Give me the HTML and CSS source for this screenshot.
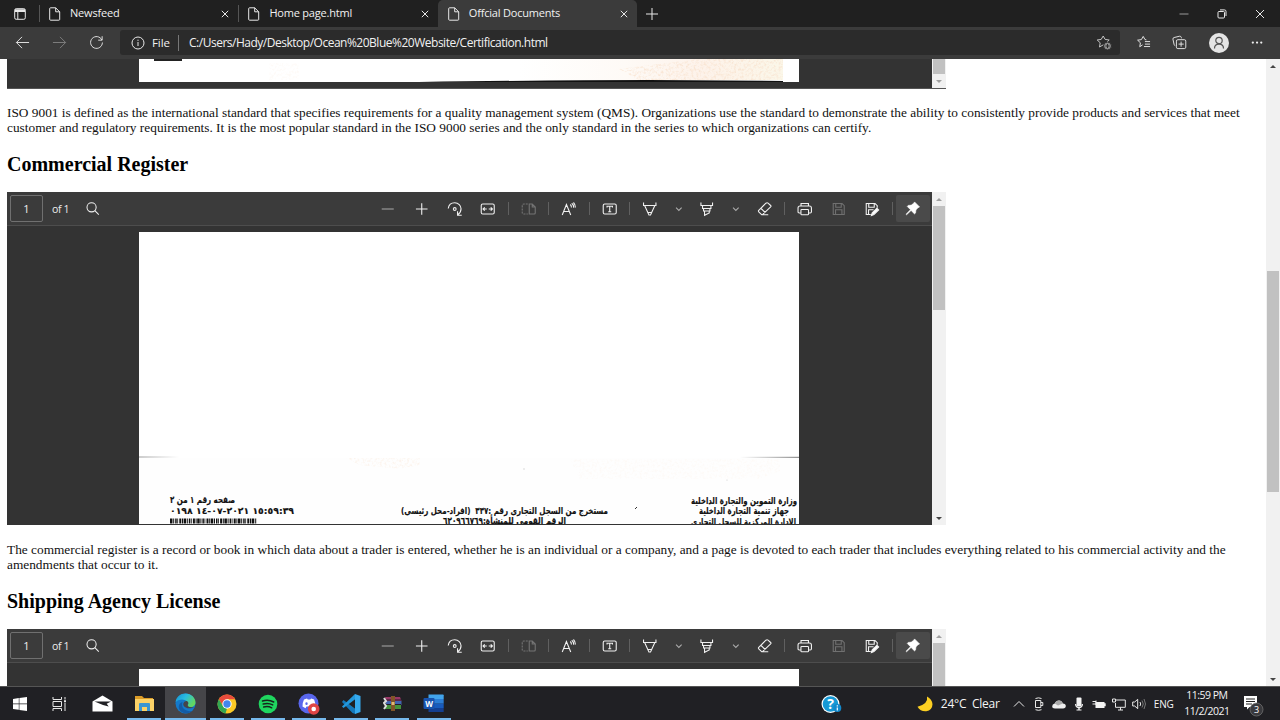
FILE: index.html
```html
<!DOCTYPE html>
<html lang="en">
<head>
<meta charset="utf-8">
<title>Offcial Documents</title>
<link rel="stylesheet" href="styles.css">
</head>
<body>
<svg class="defs" aria-hidden="true">
  <symbol id="doc" viewBox="0 0 12 14"><path d="M1.5 .8h5.2l4 4v7.6q0 .8-.8.8H1.5q-.8 0-.8-.8V1.6q0-.8.8-.8zM6.7.8v4h4"/></symbol>
  <symbol id="close" viewBox="0 0 8 8"><path d="M.8.8l6.4 6.4M7.2.8L.8 7.2"/></symbol>
  <symbol id="minus" viewBox="0 0 16 16"><path d="M2 8h12" stroke="#aaa"/></symbol>
  <symbol id="plus" viewBox="0 0 16 16"><path d="M2.2 8h11.6M8 2.2v11.6"/></symbol>
  <symbol id="rotate" viewBox="0 0 16 16"><path d="M1.500 7.500C2 3.800 4.700 1.800 8 1.800c3.600 0 6.300 2.600 6.300 6 0 2.600-1.300 4.500-3 5.700M15 14.200h-4.200v-4"/><circle cx="8" cy="8" r="1.400"/></symbol>
  <symbol id="fit" viewBox="0 0 16 16"><rect x="1.500" y="3" width="13" height="10" rx="1.500"/><path d="M3.500 8h3.500M9 8h3.500M5 6.300L3.300 8 5 9.700M11 6.300L12.700 8 11 9.700"/></symbol>
  <symbol id="pages" viewBox="0 0 16 16"><g stroke="#747474"><path d="M8.500 3h3l3 3v6q0 1-1 1h-5zM11.500 3v3h3"/><path d="M7 3H3Q1.500 3 1.500 4.500v7Q1.500 13 3 13h4" stroke-dasharray="2 1"/></g></symbol>
  <symbol id="read" viewBox="0 0 16 16"><path d="M1.500 14L5.700 3.500 10 14M3 10.500h5.500M9.500 3.500q1.200 1 1.200 3M11 2.200q2 1.500 2 4.500M12.700 1.500q2 2 2 5"/></symbol>
  <symbol id="textbox" viewBox="0 0 16 16"><rect x="1.500" y="3" width="13" height="10" rx="1.500"/><path d="M5.300 6.500V5.300h5.400v1.200M8 5.300v5.400M6.500 10.700h3"/></symbol>
  <symbol id="pen" viewBox="0 0 16 16"><path d="M1.800 1.500v3h12.400v-3M3 4.700L7.200 14h1.600L13 4.700M6.300 11.500h3.400"/></symbol>
  <symbol id="marker" viewBox="0 0 16 16"><path d="M2.200 1.500v3h11.600v-3M3.800 4.500V7.500h8.400v-3M4.800 7.500v2.500h6.400V7.500M5.800 10v4.300l4.700-2.300v-2"/></symbol>
  <symbol id="chev" viewBox="0 0 8 8"><path d="M1.200 2.700L4 5.500l2.800-2.800" stroke="#aaa"/></symbol>
  <symbol id="eraser" viewBox="0 0 16 16"><path d="M9.200 2.200L2 9.400q-.7.700 0 1.400l2.600 2.600q.7.700 1.400 0l7.900-7.500q.7-.7 0-1.400l-2.600-2.300q-.9-.8-2.100 0zM4.300 7.500l4.200 4M6 13.800h5.500"/></symbol>
  <symbol id="print" viewBox="0 0 16 16"><path d="M4.300 5V2.500h7.400V5M4 12H2.500Q1.300 12 1.300 10.800V7Q1.300 5 3.300 5h9.400q2 0 2 2v3.800q0 1.200-1.200 1.200H12"/><rect x="4.200" y="8.500" width="7.600" height="5.300" rx=".8"/></symbol>
  <symbol id="save" viewBox="0 0 16 16"><path d="M2.500 2.500h8.800l2.200 2.200v8.800h-11zM5 2.500v3.700h5.500V2.500M4.800 13.500V8.800h6.400v4.700" stroke="#707070"/></symbol>
  <symbol id="saveas" viewBox="0 0 16 16"><path d="M7 13.500H2.500v-11h8.800l2.200 2.200v2M5 2.500v3.700h5.500V2.500M4.800 13.500V8.800h5"/><path d="M7.700 14.500l.8-2.800 4.700-4.500 1.700 1.700-4.700 4.600z" fill="#fff"/></symbol>
  <symbol id="pin" viewBox="0 0 16 16"><path d="M9.500 1.800l4.700 4.700-1.500.8-1.900 2-.4 3-1 .8-3.200-3.200-4.200 4-.6-.5 4.200-4.300-3-3 .8-1 3-.3 2.200-1.700z" fill="#fff" stroke="#fff" stroke-width=".5"/></symbol>
  <symbol id="search" viewBox="0 0 16 16"><circle cx="7" cy="6.700" r="4.900"/><path d="M10.500 10.300l4.200 4.200"/></symbol>
  <symbol id="star" viewBox="0 0 16 16"><path d="M9.500 10.800L7.300 9.800 3.500 12l.7-4.200L1.200 5l4-.6L7.200 1l1.900 3.400 4.100.6L11 7"/></symbol>
</svg>

<header class="browser">
  <div class="tabs">
    <svg class="tabmenu line" viewBox="0 0 12 12"><rect x=".7" y=".7" width="10.600" height="10.600" rx="1.500"/><path d="M1 2h10M1 3.300h10" stroke-width="1.500"/><path d="M3.800 4v7"/></svg>
    <div class="tab t1"><svg class="doc line"><use href="#doc"/></svg><span>Newsfeed</span><svg class="x line"><use href="#close"/></svg></div>
    <div class="tab t2"><svg class="doc line"><use href="#doc"/></svg><span>Home page.html</span><svg class="x line"><use href="#close"/></svg></div>
    <div class="tab t3"><svg class="doc line"><use href="#doc"/></svg><span>Offcial Documents</span><svg class="x line"><use href="#close"/></svg></div>
    <svg class="newtab line" viewBox="0 0 12 12"><path d="M0 6h12M6 0v12"/></svg>
    <div class="winbtns">
      <svg class="line" viewBox="0 0 10 10"><path d="M.5 5h9" stroke="#999"/></svg>
      <svg class="line" viewBox="0 0 10 10"><rect x="1" y="2.500" width="6.500" height="6.500" rx="1"/><path d="M3 .9h4.500q1.500 0 1.500 1.500V7"/></svg>
      <svg class="line" viewBox="0 0 10 10"><path d="M1 1l8 8M9 1L1 9"/></svg>
    </div>
  </div>
  <div class="nav">
    <svg class="navicon line" viewBox="0 0 16 16"><path d="M15 8H1.500M7.500 2L1.500 8l6 6"/></svg>
    <svg class="navicon dim line" viewBox="0 0 16 16"><path d="M1 8h13.500M8.500 2l6 6-6 6"/></svg>
    <svg class="navicon line" viewBox="0 0 16 16"><path d="M13.700 5.300A6.300 6.300 0 1 0 14.300 8M14 1.300v4.200H9.800"/></svg>
    <div class="address">
      <svg class="info line" viewBox="0 0 14 14"><circle cx="7" cy="7" r="6"/><path d="M7 6v4M7 3.700v1.200"/></svg>
      <span class="scheme">File</span><span class="url">C:/Users/Hady/Desktop/Ocean%20Blue%20Website/Certification.html</span>
      <svg class="addfav line" viewBox="0 0 16 16"><use href="#star"/><circle cx="11.500" cy="11" r="4" fill="#a5a5a5" stroke="#2b2b2b"/><path d="M9.500 11h4M11.500 9v4" stroke="#2b2b2b"/></svg>
    </div>
    <div class="tools">
      <svg class="line" viewBox="0 0 16 16"><path d="M7 10.500L4 12.500l.7-4.200L1.700 5.500l4-.6L7.700 1.500l1.900 3.400 1.500.3M9.500 7h5.500M9.500 9.700h5.500M8.500 12.300H15"/></svg>
      <svg class="line" viewBox="0 0 16 16"><path d="M3.500 11.500Q2.500 11.200 2.200 10L1 4.500Q.8 3 2.200 2.700L8 1.300q1.500-.2 1.900 1.200l.2 1M4.700 12V6.500q0-1.500 1.500-1.500h7q1.500 0 1.500 1.500V13q0 1.500-1.500 1.500h-7q-1.500 0-1.500-1.500zM9.700 7v5.500M7 9.700h5.500"/></svg>
      <span class="avatar"><svg viewBox="0 0 20 20"><circle cx="10" cy="7.500" r="3.200"/><path d="M5.500 15.500q0-4.300 4.500-4.300t4.500 4.300"/></svg></span>
      <svg viewBox="0 0 16 16" fill="#eee"><circle cx="3" cy="8" r="1.200"/><circle cx="7.500" cy="8" r="1.200"/><circle cx="12" cy="8" r="1.200"/></svg>
    </div>
  </div>
</header>

<div class="viewport">
  <main class="page">
    <div class="frame tail">
      <div class="viewer"><svg class="scan" viewBox="0 0 660 23">
        <defs><linearGradient id="stain"><stop offset="0" stop-color="#fff"/><stop offset=".4" stop-color="#fefaf6"/><stop offset=".7" stop-color="#fdf2ea"/><stop offset="1" stop-color="#fbf7e9"/></linearGradient><filter id="grain" x="0" y="0" width="1" height="1"><feTurbulence type="fractalNoise" baseFrequency=".4" numOctaves="3"/><feColorMatrix values="0 0 0 0 .94  0 0 0 0 .75  0 0 0 0 .6  3 0 0 0 -1.300"/><feComposite in2="SourceGraphic" operator="in"/></filter></defs>
        <rect width="660" height="23" fill="#fff"/><rect x="380" width="264" height="21" fill="url(#stain)"/><path d="M480 10l80-10h84v21H500z" filter="url(#grain)" opacity=".65"/><path d="M130 4h30v17h-30z" filter="url(#grain)" opacity=".15"/><rect x="15" width="28" height="2" fill="#222"/><path d="M280 23Q420 21 510 21L644 22v1z" fill="#111"/></svg></div>
      <div class="vbar"><i class="thumb"></i><i class="down"></i></div>
    </div>
    <p class="iso">ISO 9001 is defined as the international standard that specifies requirements for a quality management system (QMS). Organizations use the standard to demonstrate the ability to consistently provide products and services that meet<br>customer and regulatory requirements. It is the most popular standard in the ISO 9000 series and the only standard in the series to which organizations can certify.</p>
    <h2>Commercial Register</h2>
    <div class="frame">
      <div class="viewer">
        <div class="pdfbar"><span class="num">1</span><span class="of">of 1</span><svg class="find"><use href="#search"/></svg>
          <div class="icons"><svg><use href="#minus"/></svg><svg><use href="#plus"/></svg><svg><use href="#rotate"/></svg><svg><use href="#fit"/></svg><i></i><svg><use href="#pages"/></svg><i></i><svg><use href="#read"/></svg><i></i><svg><use href="#textbox"/></svg><i></i><svg><use href="#pen"/></svg><svg class="chev"><use href="#chev"/></svg><svg><use href="#marker"/></svg><svg class="chev"><use href="#chev"/></svg><svg><use href="#eraser"/></svg><i></i><svg><use href="#print"/></svg><svg><use href="#save"/></svg><svg><use href="#saveas"/></svg><i></i><svg class="pinned"><use href="#pin"/></svg></div>
        </div>
        <svg class="scan full" viewBox="139 232 660 292">
          <defs><linearGradient id="edgeL"><stop offset="0" stop-color="#999"/><stop offset="1" stop-color="#fff"/></linearGradient><linearGradient id="edgeR"><stop offset="0" stop-color="#fff"/><stop offset="1" stop-color="#777"/></linearGradient></defs>
          <rect x="139" y="232" width="660" height="292" fill="#fff"/>
          <rect x="139" y="458" width="660" height="66" fill="#fefefe"/>
          <path d="M345 458h75v7l-20 4-40-4z" filter="url(#grain)" opacity=".3"/><path d="M570 459h210v12l-20 8H580z" filter="url(#grain)" opacity=".12"/>
          <rect x="139" y="456.500" width="40" height="1" fill="url(#edgeL)"/><rect x="740" y="456.800" width="59" height="1" fill="url(#edgeR)"/>
          <g class="arabic">
            <text x="170" y="502.500" textLength="65" lengthAdjust="spacingAndGlyphs">صفحه رقم ١ من ٢</text>
            <text class="digits" x="170" y="513.500" textLength="124" lengthAdjust="spacingAndGlyphs">٠١٩٨ ١٤-٠٧-٢٠٢١ ١٥:٥٩:٣٩</text>
            <text x="401" y="514" textLength="207" lengthAdjust="spacingAndGlyphs">مستخرج من السجل التجارى رقم :٣٣٧ &#160;(افراد-محل رئيسى)</text>
            <text x="443" y="524" textLength="123" lengthAdjust="spacingAndGlyphs">الرقم القومى للمنشأة:٦٢٠٩٦٦٧٦٩</text>
            <text x="691" y="503.500" textLength="106" lengthAdjust="spacingAndGlyphs">وزارة التموين والتجارة الداخلية</text>
            <text x="699" y="514" textLength="90" lengthAdjust="spacingAndGlyphs">جهاز تنمية التجارة الداخلية</text>
            <text x="691" y="524.500" textLength="105" lengthAdjust="spacingAndGlyphs">الادارة المركزية للسجل التجارى</text>
          </g>
          <path d="M170 521h87" stroke="#111" stroke-width="5" stroke-dasharray="2.500 .7 1 1 1.500 .6 .8 1.200 2 .7 1 .6"/>
          <path d="M635 509l2-2" stroke="#333"/><circle cx="524" cy="469" r=".7" fill="#ccc"/><circle cx="727" cy="480" r=".6" fill="#ccc"/>
        </svg>
      </div>
      <div class="vbar"><i class="up"></i><i class="thumb"></i><i class="down dark"></i></div>
    </div>
    <p class="reg">The commercial register is a record or book in which data about a trader is entered, whether he is an individual or a company, and a page is devoted to each trader that includes everything related to his commercial activity and the<br>amendments that occur to it.</p>
    <h2>Shipping Agency License</h2>
    <div class="frame">
      <div class="viewer">
        <div class="pdfbar"><span class="num">1</span><span class="of">of 1</span><svg class="find"><use href="#search"/></svg>
          <div class="icons"><svg><use href="#minus"/></svg><svg><use href="#plus"/></svg><svg><use href="#rotate"/></svg><svg><use href="#fit"/></svg><i></i><svg><use href="#pages"/></svg><i></i><svg><use href="#read"/></svg><i></i><svg><use href="#textbox"/></svg><i></i><svg><use href="#pen"/></svg><svg class="chev"><use href="#chev"/></svg><svg><use href="#marker"/></svg><svg class="chev"><use href="#chev"/></svg><svg><use href="#eraser"/></svg><i></i><svg><use href="#print"/></svg><svg><use href="#save"/></svg><svg><use href="#saveas"/></svg><i></i><svg class="pinned"><use href="#pin"/></svg></div>
        </div>
        <div class="scan full blank"></div>
      </div>
      <div class="vbar"><i class="up"></i><i class="thumb"></i></div>
    </div>
  </main>
  <div class="scrollbar"><i class="up dark"></i><i class="thumb"></i><i class="down dark"></i></div>
</div>

<footer class="taskbar">
  <div class="app start"><svg width="14" height="14" viewBox="0 0 14 14" fill="#fff"><path d="M0 2l5.800-.9v5.500H0zM6.400 1L14 0v6.600H6.400zM0 7.200h5.800v5.500L0 12zM6.400 7.200H14V14l-7.600-1z"/></svg></div>
  <div class="app view"><svg class="line" width="15" height="14" viewBox="0 0 15 14"><path d="M1 0v2.500h8.500V0M1 14v-2.500h8.500V14M1 4.500h8.500v5H1zM13 0v2.500M13 6v8"/><path d="M12 4.200h2" stroke-width="2"/></svg></div>
  <div class="app mail"><svg width="21" height="17" viewBox="0 0 21 17"><path d="M.5 6.500L10.500.5l10 6v10H.5z" fill="#fff"/><path d="M2.500 6.500h16.500l-4.300 2.300 2 2.700L11 10z" fill="#202024"/></svg></div>
  <div class="app on"><svg width="19" height="17" viewBox="0 0 19 17"><path d="M0 1h7l2 2h9v5H0z" fill="#dc9c28"/><path d="M0 4h19v12H0z" fill="#fbd267"/><path d="M4 16V9q0-1 1-1h9q1 0 1 1v7h-3v-4H7v4z" fill="#3a96d2"/></svg></div>
  <div class="app on active"><svg width="21" height="21" viewBox="0 0 21 21"><defs><linearGradient id="eg" x1="0" x2="1" y1="0" y2=".5"><stop offset="0" stop-color="#168fd2"/><stop offset=".5" stop-color="#29bce0"/><stop offset="1" stop-color="#63d860"/></linearGradient></defs><circle cx="10.500" cy="10.500" r="10" fill="#1479ca"/><path d="M.6 9C1.500 3.500 5.500.5 10.500.5c6 0 10 4.500 10 9 0 3-2.500 4.700-5.500 4.700-2 0-3-1-2.500-2.200C14.500 8.500 7.500 3.500.6 9z" fill="url(#eg)"/><path d="M7.500 9c-2 6 3 10 9.500 9-3 3.200-8.500 3-11.500 0-3-3.300-2-8 2-9z" fill="#135ba5"/><path d="M12.500 12q2-2-.5-4-3-.5-3.700 2.500c-.5 3 3 6 9.400 4.200l1.500-.8q-6 1.500-6.700-1.900z" fill="#454549"/></svg></div>
  <div class="app on"><svg width="20" height="20" viewBox="0 0 20 20"><circle cx="10" cy="10" r="9.500" fill="#fbc926"/><path d="M1.800 5.200A9.500 9.500 0 0 1 18.200 5.300H10L6 12z" fill="#e94b3c"/><path d="M1.800 5.200L6 12.200l4 2.300-1.500 4.900A9.500 9.500 0 0 1 1.800 5.200z" fill="#32a753"/><circle cx="10" cy="10" r="4.700" fill="#fff"/><circle cx="10" cy="10" r="3.700" fill="#4386ee"/></svg></div>
  <div class="app on"><svg width="20" height="20" viewBox="0 0 20 20"><circle cx="10" cy="10" r="9.300" fill="#1fd65f"/><path d="M4.500 7q6-1.800 11.200 1M5.200 10q5.200-1.500 9.500.9M5.700 13q4.500-1.200 8 .8" fill="none" stroke="#17251c" stroke-width="1.500" stroke-linecap="round"/></svg></div>
  <div class="app on"><svg width="22" height="22" viewBox="0 0 22 22"><circle cx="10.500" cy="10.500" r="10" fill="#5966ec"/><path d="M6 6.500l3-1 .8 1h2.500l.8-1 3 1q1.500 3.500 1.300 7l-3 1.700-1-1.700H8.500l-1 1.700-3-1.700Q4.300 10 6 6.500z" fill="#fff"/><ellipse cx="8.500" cy="10.700" rx="1.200" ry="1.400" fill="#5966ec"/><circle cx="15.700" cy="16" r="5.800" fill="#df4546"/><circle cx="15.700" cy="16" r="2.300" fill="#fff"/></svg></div>
  <div class="app on"><svg width="20" height="20" viewBox="0 0 20 20"><path d="M14.500 0v20l-3-1L1 8l1.500-2L14.500 15z" fill="#1478bb"/><path d="M14.500 5L2.500 14 1 12.500 14 0z" fill="#2398dc"/><path d="M14 0l5.500 2v16L14 20z" fill="#35a9ee"/></svg></div>
  <div class="app on"><svg width="19" height="16" viewBox="0 0 19 16"><path d="M2 1h15l1.500 4H3z" fill="#983766"/><path d="M3 5h15.500v4H3z" fill="#4265b0"/><path d="M2 9h16v5H2z" fill="#43923b"/><path d="M2 4h16M2 8.500h16M2 13.500h16" stroke="#261b29"/><path d="M1 2l2 3-2 2 2 3-2 3" stroke="#ddd" stroke-width="2" fill="none"/><path d="M8 0h4v15H8z" fill="#805528"/><path d="M8.500 6h3v3h-3z" fill="#e0ba74"/></svg></div>
  <div class="app on word"><svg width="21" height="19" viewBox="0 0 21 19"><path d="M5.500.5H20q.7 0 .7.700V5H5.500z" fill="#42a4ec"/><path d="M5.500 5h15.200v4.700H5.500z" fill="#2c7dd5"/><path d="M5.500 9.700h15.200V14H5.500z" fill="#185bbd"/><path d="M5.500 14h15.200v4H5.500z" fill="#143f91"/><rect x=".5" y="4" width="11" height="11" rx="1" fill="#1853ae"/><text x="6" y="12.500" text-anchor="middle" class="w">W</text></svg></div>
  <svg class="help" viewBox="0 0 21 20"><circle cx="9.500" cy="10" r="9" fill="#fff"/><circle cx="9.500" cy="10" r="7.800" fill="#1699d5"/><text x="9.500" y="15" text-anchor="middle" class="q">?</text><circle cx="16.300" cy="14" r="4" fill="#1389cc"/><path d="M16.300 11.300v1.200M16.300 13.400v3" stroke="#fff" stroke-width="1.200"/></svg>
  <svg class="moon" viewBox="0 0 16 16"><path d="M10 .5q1.500 7.300-9.500 10.300 3 5 8.800 4.500 6-1 6.200-7Q15 3 10 .5z" fill="#fccf22"/></svg>
  <span class="weather">24°C&#160; Clear</span>
  <div class="tray">
    <svg class="line" viewBox="0 0 12 14"><path d="M1 9.500l5-5 5 5"/></svg>
    <svg class="line" viewBox="0 0 12 14"><path d="M2.500 3.500h5.300v7H2.500zM7.800 5.500h2v3h-2M2.500 1.500q3-1.300 6 0M2.500 12.700q3 1.300 6 0"/></svg>
    <svg class="cloud" viewBox="0 0 14 14"><path d="M3 11.500q-2.800 0-2.800-2.200Q.2 7 2.700 6.500 4 3.500 7 3.500q2.800 0 3.800 3 3 .2 3 2.600 0 2.400-2.800 2.400z" fill="#eee"/><path d="M2.700 6.500Q4 3.500 7 3.500q2.800 0 3.800 3L6 8.500z" fill="#aaa"/></svg>
    <svg viewBox="0 0 12 14" fill="#f3f3f3"><rect x="3.500" y=".5" width="5" height="9" rx="1"/><path d="M2 7h1.200q0 3 2.800 3t2.800-3H10q0 3.600-3.300 4.200v1.300H8.500v1h-5v-1h1.800v-1.300Q2 10.600 2 7z"/></svg>
    <svg class="battery" viewBox="0 0 14 14"><path d="M3.500 5h9v1.300h1.200v3h-1.200V11h-9z" fill="#f3f3f3"/><path d="M.5 4.500h3.500M.5 7h3.500M4 3.500V8" stroke="#eee"/></svg>
    <svg class="line net" viewBox="0 0 14 14"><path d="M4 3h9.300v7.300H3.500V6M6 13h5M8.500 10.300V13"/><path d="M.5 2h3v3h-3z"/></svg>
    <svg class="line snd" viewBox="0 0 14 14"><path d="M.7 5h2l3-2.700v9.400L2.700 9h-2zM8 5q1.300 2 0 4"/><path d="M10 3.500q2.500 3.500 0 7M12 2q3 5 0 10" stroke="#777"/></svg>
  </div>
  <span class="eng">ENG</span>
  <div class="clock"><span>11:59 PM</span><span>11/2/2021</span></div>
  <svg class="notice" viewBox="0 0 22 22"><path d="M1 1h13v11H6.500L4 14.500V12H1z" fill="#fff"/><path d="M3 4h9M3 6.500h9M3 9h6" stroke="#222"/><circle cx="13.500" cy="14.500" r="6.500" fill="#39393d" stroke="#777" stroke-width=".7"/><text x="13.500" y="18" text-anchor="middle">3</text></svg>
</footer>
</body>
</html>
```
FILE: styles.css
```css
* { box-sizing: border-box; }
body { margin: 0; width: 1280px; height: 720px; overflow: hidden; display: flex; flex-direction: column; background: #fff; font-family: "Open Sans", "Noto Sans", sans-serif; }
svg { display: block; flex: none; }
.defs { position: absolute; width: 0; height: 0; }
.line { fill: none; stroke: #e8e8e8; stroke-width: 1; }
.browser { height: 59px; flex: none; color: #f1f1f1; }
.tabs { display: flex; align-items: center; height: 27px; background: #202020; }
.tabmenu { width: 12px; height: 12px; margin: 0 13px 0 14px; }
.tab { display: flex; align-items: center; height: 27px; width: 199.400px; padding: 0 9px 0 10px; font-size: 11px; letter-spacing: -.2px; white-space: nowrap; }
.tab span { padding-bottom: 2px; }
.t1, .t2 { background: linear-gradient(#555, #555) 0 5px / 1px 17px no-repeat; }
.t3 { background: #3b3b3b; border-radius: 5px 5px 0 0; }
.doc { width: 12px; height: 14px; margin-right: 9px; }
.x { width: 8px; height: 8px; margin-left: auto; }
.newtab { width: 12px; height: 12px; margin-left: 9px; }
.winbtns { display: flex; gap: 28px; margin: 0 15px 0 auto; }
.winbtns svg { width: 10px; height: 10px; }
.nav { display: flex; align-items: center; height: 32px; background: #3b3b3b; padding-bottom: 1px; }
.navicon { width: 15px; height: 15px; margin-left: 15px; }
.navicon + .navicon { margin-left: 22px; }
.dim { opacity: .4; }
.address { display: flex; align-items: center; width: 1000px; height: 25px; margin-left: 16px; padding: 0 8px 0 11px; background: #2b2b2b; border-radius: 3px; font-size: 12px; white-space: nowrap; }
.info { width: 14px; height: 14px; margin-right: 7px; }
.scheme { width: 27px; height: 16px; line-height: 15px; font-size: 11.500px; letter-spacing: -.1px; border-right: 1px solid #777; }
.url { margin-left: 10px; line-height: 16px; letter-spacing: -.49px; }
.addfav { width: 16px; height: 16px; margin-left: auto; opacity: .8; }
.tools { display: flex; align-items: center; margin: 0 15px 0 16px; width: 129px; justify-content: space-between; }
.tools > svg { width: 15px; height: 15px; }
.avatar { width: 20px; height: 20px; border-radius: 50%; background: #e5e5e5; }
.avatar svg { fill: none; stroke: #555; stroke-width: 1.200; }

.viewport { display: flex; height: 627px; flex: none; overflow: hidden; }
.page { flex: 1; padding-left: 7px; font: 13.333px/15.300px "Liberation Serif", serif; color: #000; }
.page p { margin: 0; height: 48px; white-space: nowrap; color: #111; }
.page .iso { margin-top: 16px; }
.page .reg { margin-top: 17px; }
.page h2 { margin: 0; height: 39px; font-size: 20px; line-height: 23px; }
.frame { display: flex; width: 939px; height: 333px; background: #333; overflow: hidden; }
.viewer { flex: 1; min-width: 0; }
.tail { height: 30px; border-bottom: 1px solid #555; }
.scan { width: 660px; height: 23px; margin-left: 132px; }
.full { height: 292px; margin-top: 6px; }
.blank { background: #fff; }
.pdfbar { display: flex; align-items: center; height: 34px; background: #3b3b3b; border-bottom: 1px solid #4d4d4d; padding: 0 2.500px 0 3px; color: #eee; font: 11px "Open Sans", sans-serif; }
.num { width: 33px; height: 27px; border: 1px solid #707070; border-radius: 2px; text-align: center; line-height: 25px; }
.of { width: 34px; padding-left: 9px; white-space: nowrap; font-size: 10.500px; letter-spacing: -.4px; }
.find { width: 15px; height: 15px; margin-left: 7.500px; }
.pdfbar svg { fill: none; stroke: #f0f0f0; stroke-width: 1.100; }
.icons { display: flex; align-items: center; margin-left: auto; }
.icons svg { width: 33.480px; height: 16px; }
.icons .chev { width: 23.700px; height: 8px; }
.icons .pinned { width: 34px; height: 27px; padding: 5px 0; background: #4a4a4a; border-radius: 2px; }
.icons i { width: 1px; height: 13px; margin: 0 3px; background: #606060; }
.vbar, .scrollbar { display: flex; flex-direction: column; align-items: center; width: 14px; background: #f1f1f1; }
.vbar .thumb { width: 12px; height: 104px; background: #c1c1c1; }
.tail .vbar .thumb { height: 16px; }
.up, .down { flex: none; width: 14px; height: 14px; background: #a0a0a0; clip-path: polygon(4px 9px, 7px 6px, 10px 9px); }
.down { margin-top: auto; clip-path: polygon(4px 6px, 10px 6px, 7px 9px); }
.dark { background: #454545; }
.scrollbar .thumb { width: 12px; height: 221px; margin-top: 198px; background: #c1c1c1; }
.arabic { font: bold 9.500px "DejaVu Sans", sans-serif; fill: #111; stroke: #111; stroke-width: .15; }
.digits { direction: ltr; unicode-bidi: bidi-override; font-size: 9px; }

.taskbar { display: flex; align-items: center; height: 34px; flex: none; background: #202024; border-top: 1px solid #555; color: #f5f5f5; }
.app { display: flex; align-items: center; justify-content: center; width: 34px; height: 33px; margin-right: 7.350px; flex: none; }
.start { width: 40px; margin: 0; }
.view { width: 39px; margin-right: 7px; }
.mail { padding-right: 1px; }
.on { border-bottom: 2px solid #76b9ed; padding-top: 2px; }
.active { width: 41px; margin: 0 3.600px 0 -3.500px; background: #454549; }
.w { font: bold 8px "Open Sans", sans-serif; fill: #fff; }
.q { font: bold 14px "Open Sans", sans-serif; fill: #fff; }
.help { width: 21px; height: 20px; margin-left: 363px; }
.moon { width: 16px; height: 16px; margin-left: 75px; }
.weather { width: 70px; margin-left: 8px; font-size: 12px; letter-spacing: -.25px; white-space: nowrap; }
.tray { display: flex; align-items: center; gap: 6px; margin-left: 1px; }
.tray svg { width: 14px; height: 14px; }
.eng { width: 28px; margin-left: 8px; font-size: 10px; letter-spacing: -.2px; }
.clock { display: flex; flex-direction: column; align-items: center; width: 48px; margin-left: 1px; font-size: 10.500px; line-height: 15.500px; letter-spacing: -.5px; white-space: nowrap; }
.notice { width: 22px; height: 22px; margin-left: 12px; margin-top: 4px; }
.notice text { font: 9px "Open Sans", sans-serif; fill: #fff; }
```
